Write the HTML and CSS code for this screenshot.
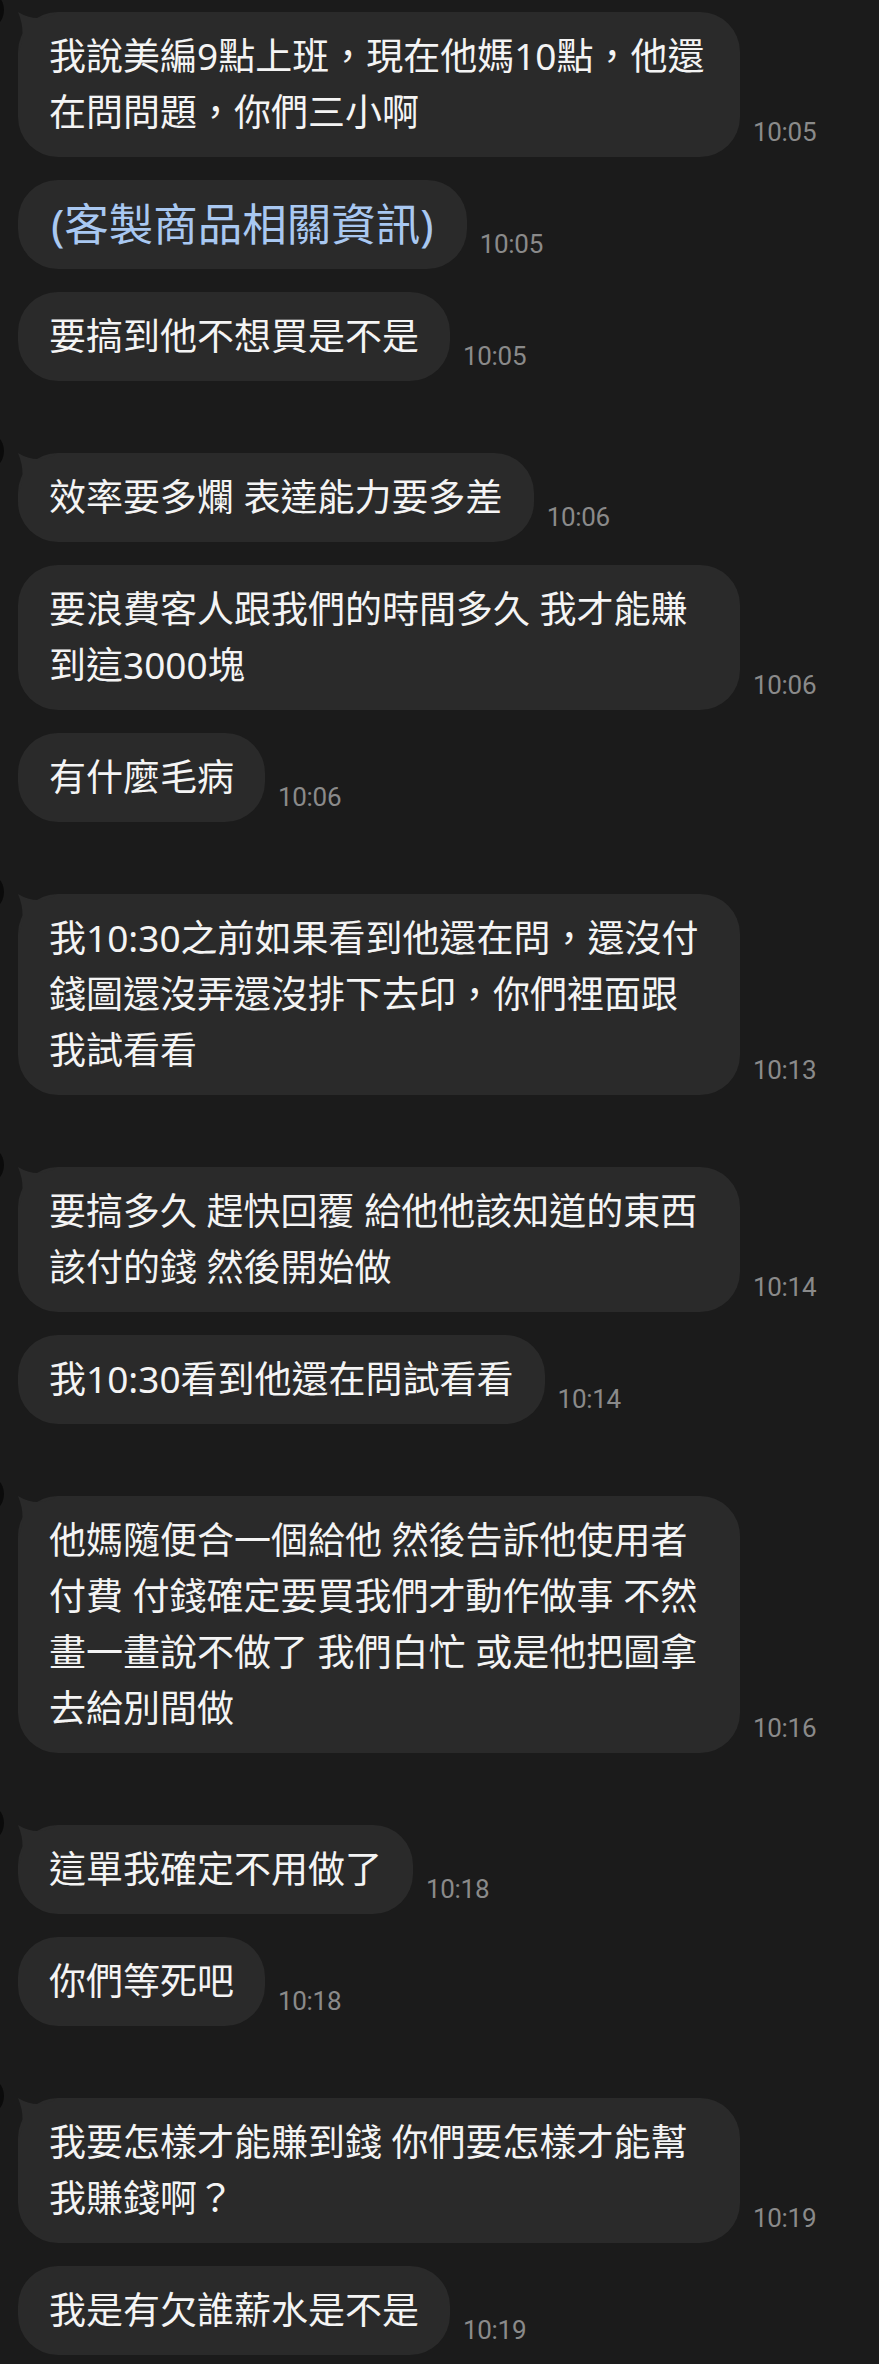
FILE: index.html
```html
<!DOCTYPE html>
<html lang="zh-Hant">
<head>
<meta charset="utf-8">
<title>Chat</title>
<link rel="stylesheet" href="styles.css">
</head>
<body>
<div class="chat">
  <div class="group">
    <div class="avatar"></div>
    <div class="row"><div class="bubble tail"><svg class="horn" viewBox="0 0 44 44"><path d="M0 0 Q20 12 40 0 L44 0 L44 44 L0 44 L0 42 Q9 21 0 0 Z"/></svg>我說美編9點上班，現在他媽10點，他還在問問題，你們三小啊</div><span class="time">10:05</span></div>
    <div class="row"><div class="bubble info">(客製商品相關資訊)</div><span class="time">10:05</span></div>
    <div class="row"><div class="bubble">要搞到他不想買是不是</div><span class="time">10:05</span></div>
  </div>
  <div class="group">
    <div class="avatar"></div>
    <div class="row"><div class="bubble tail"><svg class="horn" viewBox="0 0 44 44"><path d="M0 0 Q20 12 40 0 L44 0 L44 44 L0 44 L0 42 Q9 21 0 0 Z"/></svg>效率要多爛 表達能力要多差</div><span class="time">10:06</span></div>
    <div class="row"><div class="bubble">要浪費客人跟我們的時間多久 我才能賺到這3000塊</div><span class="time">10:06</span></div>
    <div class="row"><div class="bubble">有什麼毛病</div><span class="time">10:06</span></div>
  </div>
  <div class="group">
    <div class="avatar"></div>
    <div class="row"><div class="bubble tail"><svg class="horn" viewBox="0 0 44 44"><path d="M0 0 Q20 12 40 0 L44 0 L44 44 L0 44 L0 42 Q9 21 0 0 Z"/></svg>我10:30之前如果看到他還在問，還沒付錢圖還沒弄還沒排下去印，你們裡面跟我試看看</div><span class="time">10:13</span></div>
  </div>
  <div class="group">
    <div class="avatar"></div>
    <div class="row"><div class="bubble tail"><svg class="horn" viewBox="0 0 44 44"><path d="M0 0 Q20 12 40 0 L44 0 L44 44 L0 44 L0 42 Q9 21 0 0 Z"/></svg>要搞多久 趕快回覆 給他他該知道的東西該付的錢 然後開始做</div><span class="time">10:14</span></div>
    <div class="row"><div class="bubble">我10:30看到他還在問試看看</div><span class="time">10:14</span></div>
  </div>
  <div class="group">
    <div class="avatar"></div>
    <div class="row"><div class="bubble tail"><svg class="horn" viewBox="0 0 44 44"><path d="M0 0 Q20 12 40 0 L44 0 L44 44 L0 44 L0 42 Q9 21 0 0 Z"/></svg>他媽隨便合一個給他 然後告訴他使用者付費 付錢確定要買我們才動作做事 不然畫一畫說不做了 我們白忙 或是他把圖拿去給別間做</div><span class="time">10:16</span></div>
  </div>
  <div class="group">
    <div class="avatar"></div>
    <div class="row"><div class="bubble tail"><svg class="horn" viewBox="0 0 44 44"><path d="M0 0 Q20 12 40 0 L44 0 L44 44 L0 44 L0 42 Q9 21 0 0 Z"/></svg>這單我確定不用做了</div><span class="time">10:18</span></div>
    <div class="row"><div class="bubble">你們等死吧</div><span class="time">10:18</span></div>
  </div>
  <div class="group">
    <div class="avatar"></div>
    <div class="row"><div class="bubble tail"><svg class="horn" viewBox="0 0 44 44"><path d="M0 0 Q20 12 40 0 L44 0 L44 44 L0 44 L0 42 Q9 21 0 0 Z"/></svg>我要怎樣才能賺到錢 你們要怎樣才能幫我賺錢啊？</div><span class="time">10:19</span></div>
    <div class="row"><div class="bubble">我是有欠誰薪水是不是</div><span class="time">10:19</span></div>
  </div>
</div>
</body>
</html>
```
FILE: styles.css
```css
html, body {
  margin: 0;
  padding: 0;
  background: #1b1b1b;
}

body {
  width: 879px;
  min-height: 2364px;
  overflow: hidden;
}

.chat {
  display: flex;
  flex-direction: column;
  gap: 72px;
  padding: 12px 0 0 18px;
}

.group {
  position: relative;
  display: flex;
  flex-direction: column;
  gap: 23px;
}

.avatar {
  position: absolute;
  left: -54px;
  top: -22px;
  width: 40px;
  height: 40px;
  border-radius: 50%;
  background: #0b0b0b;
}

.row {
  display: flex;
  align-items: flex-end;
}

.bubble {
  position: relative;
  z-index: 0;
  box-sizing: border-box;
  max-width: 722px;
  padding: 16px 31px 17px 31px;
  background: #2a2a2a;
  border-radius: 40px;
  color: #f4f4f4;
  font-family: "Noto Sans", "Noto Sans CJK TC", sans-serif;
  font-size: 37px;
  line-height: 56px;
  word-break: break-all;
}

.horn {
  position: absolute;
  z-index: -1;
  left: 0;
  top: 0;
  width: 44px;
  height: 44px;
  fill: #2a2a2a;
}

.bubble.info {
  color: #a9c8f1;
  font-size: 44.5px;
  padding-left: 33px;
  padding-right: 33px;
}

.time {
  flex: none;
  margin: 0 0 12px 13px;
  color: #8a8a8a;
  font-family: "Roboto", "Liberation Sans", sans-serif;
  font-size: 26px;
  line-height: 26px;
  letter-spacing: -0.3px;
}
```
